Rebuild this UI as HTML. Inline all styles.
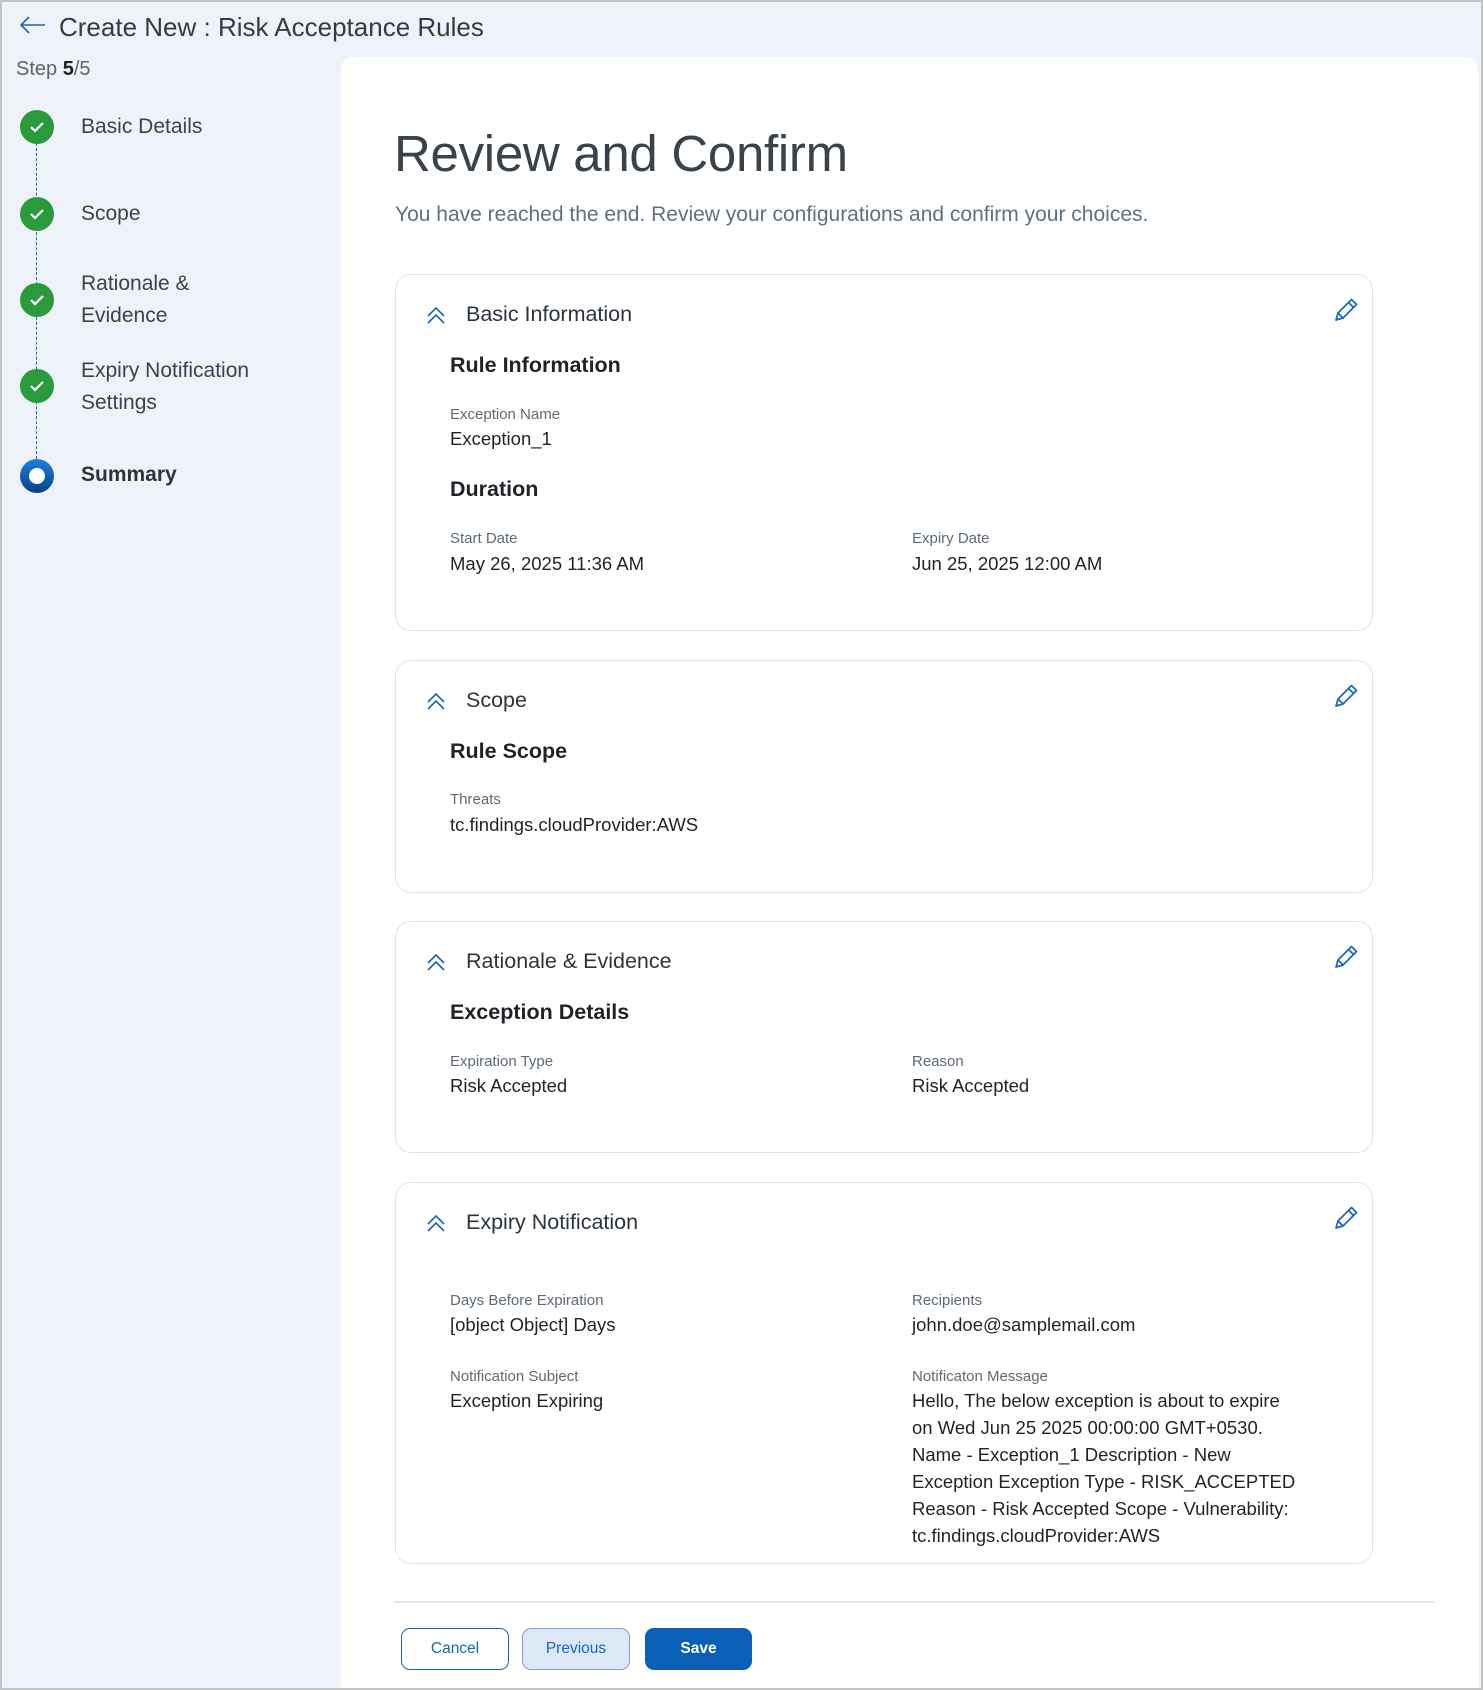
<!DOCTYPE html>
<html><head><meta charset="utf-8"><style>
*{box-sizing:border-box;margin:0;padding:0}
body{width:1483px;height:1690px;background:#eef3fa;font-family:"Liberation Sans",Arial,sans-serif;position:relative;overflow:hidden;color:#1f2328}
.frame{position:absolute;left:0;top:0;width:1483px;height:1690px;border:2px solid #c4c4c4;z-index:10;pointer-events:none}
.abs{position:absolute;white-space:nowrap}
.title{left:59px;top:12px;font-size:26px;color:#333b44}
.step{left:16px;top:58px;font-size:20px;color:#5c6670}
.step b{color:#222}
.circ{position:absolute;left:20px;width:34px;height:34px;border-radius:50%;background:#2a9a3c}
.circ svg{position:absolute;left:9px;top:10px}
.lbl{position:absolute;left:81px;font-size:21px;color:#3a434c;line-height:32px}
.dash{position:absolute;left:36px;width:0;border-left:1.5px dashed #1a64b8}
.panel{position:absolute;left:341px;top:57px;width:1137px;height:1631px;background:#fff;border-radius:12px 12px 0 0}
.h1{left:394px;top:124px;font-size:51px;color:#3a434c;letter-spacing:-0.3px}
.sub{left:395px;top:203px;font-size:21px;color:#5e7180}
.card{position:absolute;left:395px;width:978px;border:1.5px solid #e1e5ea;border-radius:16px;background:#fff}
.ch{position:absolute;left:70px;font-size:21.5px;color:#2c343c}
.chev{position:absolute;left:30px}
.pen{position:absolute;left:937px}
.sh{position:absolute;left:54px;font-size:21.5px;font-weight:bold;color:#1f2328}
.l{position:absolute;font-size:15px;color:#5e6a75}
.v{position:absolute;font-size:18.5px;color:#1f2328;line-height:27px}
.btn{position:absolute;top:1628px;height:42px;border-radius:9px;font-size:15.5px;display:flex;align-items:center;justify-content:center}
</style></head><body>
<div class="frame"></div>
<svg class="abs" style="left:18px;top:15px" width="28" height="20" viewBox="0 0 28 20"><path d="M27 10H3M11 2L3 10l8 8" fill="none" stroke="#1a64b8" stroke-width="1.6"/></svg>
<div class="abs title">Create New : Risk Acceptance Rules</div>
<div class="abs step">Step <b>5</b>/5</div>

<div class="dash" style="top:143px;height:316px"></div>
<div class="circ" style="top:110px"><svg width="16" height="14"><path d="M2 7l4 4 8-8" fill="none" stroke="#fff" stroke-width="2.2"/></svg></div>
<div class="circ" style="top:197px"><svg width="16" height="14"><path d="M2 7l4 4 8-8" fill="none" stroke="#fff" stroke-width="2.2"/></svg></div>
<div class="circ" style="top:283px"><svg width="16" height="14"><path d="M2 7l4 4 8-8" fill="none" stroke="#fff" stroke-width="2.2"/></svg></div>
<div class="circ" style="top:369px"><svg width="16" height="14"><path d="M2 7l4 4 8-8" fill="none" stroke="#fff" stroke-width="2.2"/></svg></div>
<div class="circ" style="top:459px;background:linear-gradient(#1f7fe0,#0a3f86)"><div style="position:absolute;left:9px;top:9px;width:16px;height:16px;border-radius:50%;background:#fff"></div></div>
<div class="lbl" style="top:111px">Basic Details</div>
<div class="lbl" style="top:198px">Scope</div>
<div class="lbl" style="top:268px">Rationale &amp;<br>Evidence</div>
<div class="lbl" style="top:355px">Expiry Notification<br>Settings</div>
<div class="lbl" style="top:459px;font-weight:bold;color:#2c343c">Summary</div>

<div class="panel"></div>
<div class="abs h1">Review and Confirm</div>
<div class="abs sub">You have reached the end. Review your configurations and confirm your choices.</div>

<div class="card" style="top:274px;height:357px">
<svg class="chev" style="top:31px" width="20" height="18"><path d="M2 10l8-8 8 8M2 17l8-8 8 8" fill="none" stroke="#1a64b8" stroke-width="1.6"/></svg>
<div class="ch" style="top:27px">Basic Information</div>
<svg class="pen" style="top:20px" width="28" height="28" viewBox="0 0 28 28"><path d="M3 25l2-7L18.5 4.5l5 5L10 23zM15.5 7.5l5 5M5 18l5 5" fill="none" stroke="#1a64b8" stroke-width="1.7" stroke-linejoin="round"/></svg>
<div class="sh" style="top:78px">Rule Information</div>
<div class="l" style="left:54px;top:131px">Exception Name</div>
<div class="v" style="left:54px;top:150px">Exception_1</div>
<div class="sh" style="top:202px">Duration</div>
<div class="l" style="left:54px;top:255px">Start Date</div>
<div class="v" style="left:54px;top:275px">May 26, 2025 11:36 AM</div>
<div class="l" style="left:516px;top:255px">Expiry Date</div>
<div class="v" style="left:516px;top:275px">Jun 25, 2025 12:00 AM</div>
</div>

<div class="card" style="top:660px;height:233px">
<svg class="chev" style="top:31px" width="20" height="18"><path d="M2 10l8-8 8 8M2 17l8-8 8 8" fill="none" stroke="#1a64b8" stroke-width="1.6"/></svg>
<div class="ch" style="top:27px">Scope</div>
<svg class="pen" style="top:20px" width="28" height="28" viewBox="0 0 28 28"><path d="M3 25l2-7L18.5 4.5l5 5L10 23zM15.5 7.5l5 5M5 18l5 5" fill="none" stroke="#1a64b8" stroke-width="1.7" stroke-linejoin="round"/></svg>
<div class="sh" style="top:78px">Rule Scope</div>
<div class="l" style="left:54px;top:130px">Threats</div>
<div class="v" style="left:54px;top:150px">tc.findings.cloudProvider:AWS</div>
</div>

<div class="card" style="top:921px;height:232px">
<svg class="chev" style="top:31px" width="20" height="18"><path d="M2 10l8-8 8 8M2 17l8-8 8 8" fill="none" stroke="#1a64b8" stroke-width="1.6"/></svg>
<div class="ch" style="top:27px">Rationale &amp; Evidence</div>
<svg class="pen" style="top:20px" width="28" height="28" viewBox="0 0 28 28"><path d="M3 25l2-7L18.5 4.5l5 5L10 23zM15.5 7.5l5 5M5 18l5 5" fill="none" stroke="#1a64b8" stroke-width="1.7" stroke-linejoin="round"/></svg>
<div class="sh" style="top:78px">Exception Details</div>
<div class="l" style="left:54px;top:131px">Expiration Type</div>
<div class="v" style="left:54px;top:150px">Risk Accepted</div>
<div class="l" style="left:516px;top:131px">Reason</div>
<div class="v" style="left:516px;top:150px">Risk Accepted</div>
</div>

<div class="card" style="top:1182px;height:382px">
<svg class="chev" style="top:31px" width="20" height="18"><path d="M2 10l8-8 8 8M2 17l8-8 8 8" fill="none" stroke="#1a64b8" stroke-width="1.6"/></svg>
<div class="ch" style="top:27px">Expiry Notification</div>
<svg class="pen" style="top:20px" width="28" height="28" viewBox="0 0 28 28"><path d="M3 25l2-7L18.5 4.5l5 5L10 23zM15.5 7.5l5 5M5 18l5 5" fill="none" stroke="#1a64b8" stroke-width="1.7" stroke-linejoin="round"/></svg>
<div class="l" style="left:54px;top:109px">Days Before Expiration</div>
<div class="v" style="left:54px;top:128px">[object Object] Days</div>
<div class="l" style="left:516px;top:109px">Recipients</div>
<div class="v" style="left:516px;top:128px">john.doe@samplemail.com</div>
<div class="l" style="left:54px;top:185px">Notification Subject</div>
<div class="v" style="left:54px;top:204px">Exception Expiring</div>
<div class="l" style="left:516px;top:185px">Notificaton Message</div>
<div class="v" style="left:516px;top:204px">Hello, The below exception is about to expire<br>on Wed Jun 25 2025 00:00:00 GMT+0530.<br>Name - Exception_1 Description - New<br>Exception Exception Type - RISK_ACCEPTED<br>Reason - Risk Accepted Scope - Vulnerability:<br>tc.findings.cloudProvider:AWS</div>
</div>

<div class="abs" style="left:394px;top:1601px;width:1040px;height:2px;background:#e3e8ee"></div>
<div class="btn" style="left:401px;width:108px;border:1.5px solid #1a64b8;color:#1a64b8;background:#fff">Cancel</div>
<div class="btn" style="left:522px;width:108px;border:1.5px solid #7aa3d6;color:#1a64b8;background:#dce8f6">Previous</div>
<div class="btn" style="left:645px;width:107px;background:#0b60b6;color:#fff;font-weight:bold">Save</div>
</body></html>
